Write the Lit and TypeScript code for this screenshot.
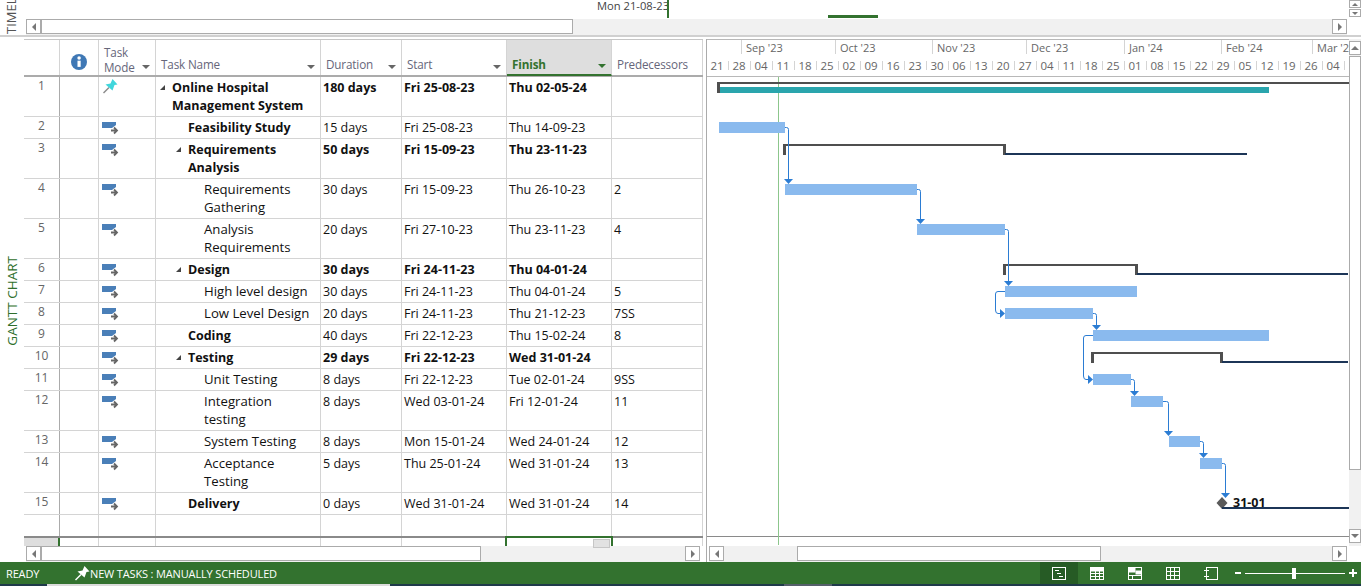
import { LitElement, html, css, svg } from 'lit';
import { customElement } from 'lit/decorators.js';

type Task = { id: number; name: string; level: number; bold?: boolean; group?: boolean; dur: string; start: string; finish: string; pred: string; pin?: boolean };

const TASKS: Task[] = [
  { id: 1, name: 'Online Hospital\nManagement System', level: 0, bold: true, group: true, dur: '180 days', start: 'Fri 25-08-23', finish: 'Thu 02-05-24', pred: '', pin: true },
  { id: 2, name: 'Feasibility Study', level: 1, bold: true, dur: '15 days', start: 'Fri 25-08-23', finish: 'Thu 14-09-23', pred: '' },
  { id: 3, name: 'Requirements\nAnalysis', level: 1, bold: true, group: true, dur: '50 days', start: 'Fri 15-09-23', finish: 'Thu 23-11-23', pred: '' },
  { id: 4, name: 'Requirements\nGathering', level: 2, dur: '30 days', start: 'Fri 15-09-23', finish: 'Thu 26-10-23', pred: '2' },
  { id: 5, name: 'Analysis\nRequirements', level: 2, dur: '20 days', start: 'Fri 27-10-23', finish: 'Thu 23-11-23', pred: '4' },
  { id: 6, name: 'Design', level: 1, bold: true, group: true, dur: '30 days', start: 'Fri 24-11-23', finish: 'Thu 04-01-24', pred: '' },
  { id: 7, name: 'High level design', level: 2, dur: '30 days', start: 'Fri 24-11-23', finish: 'Thu 04-01-24', pred: '5' },
  { id: 8, name: 'Low Level Design', level: 2, dur: '20 days', start: 'Fri 24-11-23', finish: 'Thu 21-12-23', pred: '7SS' },
  { id: 9, name: 'Coding', level: 1, bold: true, dur: '40 days', start: 'Fri 22-12-23', finish: 'Thu 15-02-24', pred: '8' },
  { id: 10, name: 'Testing', level: 1, bold: true, group: true, dur: '29 days', start: 'Fri 22-12-23', finish: 'Wed 31-01-24', pred: '' },
  { id: 11, name: 'Unit Testing', level: 2, dur: '8 days', start: 'Fri 22-12-23', finish: 'Tue 02-01-24', pred: '9SS' },
  { id: 12, name: 'Integration\ntesting', level: 2, dur: '8 days', start: 'Wed 03-01-24', finish: 'Fri 12-01-24', pred: '11' },
  { id: 13, name: 'System Testing', level: 2, dur: '8 days', start: 'Mon 15-01-24', finish: 'Wed 24-01-24', pred: '12' },
  { id: 14, name: 'Acceptance\nTesting', level: 2, dur: '5 days', start: 'Thu 25-01-24', finish: 'Wed 31-01-24', pred: '13' },
  { id: 15, name: 'Delivery', level: 1, bold: true, dur: '0 days', start: 'Wed 31-01-24', finish: 'Wed 31-01-24', pred: '14' },
];

const MONTHS = [
  { x: 34, label: "Sep '23" }, { x: 128, label: "Oct '23" }, { x: 225, label: "Nov '23" },
  { x: 319, label: "Dec '23" }, { x: 417, label: "Jan '24" }, { x: 514, label: "Feb '24" },
  { x: 605, label: "Mar '24" },
];
const WEEKS = '21 28 04 11 18 25 02 09 16 23 30 06 13 20 27 04 11 18 25 01 08 15 22 29 05 12 19 26 04'.split(' ');

// everything in the chart is in page coordinates, the svg viewBox starts at the plot corner
const CX = 707;
const BARS = [[719, 122, 785], [785, 184, 917], [917, 224, 1005], [1005, 286, 1137], [1005, 308, 1093], [1093, 330, 1269], [1093, 374, 1131], [1131, 396, 1163], [1169, 436, 1200], [1200, 458, 1222]];
const SUMMARIES = [[783, 144, 1006, 153, 1247], [1003, 264, 1138, 273, 1348], [1091, 352, 1223, 361, 1348]];
const DOWN_LINKS = [[785, 127, 788, 183], [917, 189, 920, 223], [1005, 229, 1008, 285], [1093, 313, 1096, 329], [1131, 379, 1134, 395], [1163, 401, 1168, 435], [1200, 441, 1203, 457], [1222, 463, 1225, 497]];
const SS_LINKS = [[1005, 291, 995, 313], [1093, 335, 1083, 379]];

const pinIcon = (fill: string, needle: string) => svg`<svg width="16" height="16" viewBox="0 0 16 16"><path d="M1.500 15 7 9.500" stroke="${needle}" stroke-width="1.400"/><path d="M10.500 1 15.500 6.500 12.500 7 10.500 12.500 3.500 6.500 8.500 5.500Z" fill="${fill}"/></svg>`;

@customElement('app-root')
export class AppRoot extends LitElement {
  static styles = css`
    :host { display: block; width: 1361px; height: 586px; overflow: hidden; background: #fff; font-family: 'Open Sans', 'Noto Sans', sans-serif; font-size: 12.5px; color: #111; }
    * { box-sizing: border-box; }
    .page { display: flex; flex-direction: column; height: 586px; }

    .timeline { height: 37px; flex: none; display: flex; border-bottom: 2px solid #d0d0d0; position: relative; }
    .vlabel { writing-mode: vertical-rl; transform: rotate(180deg); white-space: nowrap; }
    .tl-label { width: 26px; flex: none; height: 34px; overflow: hidden; padding-left: 4px; color: #555; font-size: 13px; line-height: 15px; }
    .tl-label .vlabel { display: block; height: 34px; }
    .tl-body { flex: 1; display: flex; flex-direction: column; }
    .tl-band { height: 19px; flex: none; }
    .tl-date { position: absolute; left: 597px; top: -2px; font-size: 11.2px; line-height: 16px; color: #444; }
    .tl-now { position: absolute; left: 667px; top: 0; width: 2px; height: 18px; background: #33722f; }
    .tl-mark { position: absolute; left: 828px; top: 15px; width: 50px; height: 3px; background: #33722f; }
    .tl-spin { position: absolute; right: 0; top: 0; width: 12px; display: flex; flex-direction: column; gap: 1px; }
    .tl-spin i { display: block; height: 8px; background: #fff; border: 1px solid #ababab; position: relative; }
    .tl-spin i::after { content: ''; position: absolute; left: 2px; top: 2px; border: 3px solid transparent; border-bottom-color: #777; border-top: 0; }
    .tl-spin i:last-child::after { border-bottom: 0; border-top: 3px solid #777; }

    .sbar { height: 16px; display: flex; background: #f1f1f1; flex: none; }
    .timeline .sbar { margin-right: 14px; }
    .sbtn { width: 15px; flex: none; height: 15px; background: #fff; border: 1px solid #ababab; display: flex; align-items: center; justify-content: center; }
    .sbtn::after { content: ''; border: 4px solid transparent; border-left: 0; border-right: 4px solid #777; }
    .sbtn.next::after { border-right: 0; border-left: 4px solid #777; }
    .thumb { height: 15px; background: #fff; border: 1px solid #ababab; flex: none; }
    .thumb.tl { width: 532px; }
    .thumb.tasks { width: 440px; }
    .thumb.bars { width: 304px; }
    .track { flex: 1; }
    .track.before { flex: none; width: 73px; }

    .main { flex: 1; display: flex; min-height: 0; padding-top: 2px; }
    .side { width: 24px; flex: none; display: flex; align-items: center; justify-content: center; }
    .side .vlabel { color: #2f6f2c; font-size: 13.500px; line-height: 16px; }
    .sheet { width: 679px; flex: none; display: flex; flex-direction: column; }
    .divider { width: 4px; flex: none; border-right: 1px solid #ababab; }

    .cols { display: grid; grid-template-columns: 36px 39px 57px 165px 81px 105px 105px 91px; width: 679px; }
    .head { height: 38px; border-top: 1px solid #c6c6c6; border-bottom: 2px solid #ababab; flex: none; color: #66667a; font-size: 11.700px; letter-spacing: -0.15px; line-height: 15px; }
    .head > div { border-right: 1px solid #d4d4d4; position: relative; display: flex; align-items: flex-end; padding: 0 0 3px 5px; height: 35px; }
    .head > div.finish { background: #dedede; color: #33722f; font-weight: 700; height: 36px; border-bottom: 2px solid #33722f; padding-bottom: 2px; }
    .head > div.mode { display: block; padding-top: 5px; }
    .filter { position: absolute; right: 5px; bottom: 6px; border: 4px solid transparent; border-bottom: 0; border-top: 4px solid #666; }
    .finish .filter { border-top-color: #33722f; }
    .head > div.info { justify-content: center; padding: 0 0 5px; }
    .info svg { display: block; }

    .rows { flex: 1; min-height: 0; display: flex; flex-direction: column; }
    .row { border-bottom: 1px solid #d4d4d4; line-height: 18px; height: 22px; flex: none; }
    .row.tall { height: 40px; }
    .row > div { border-right: 1px solid #d4d4d4; padding: 2px 0 0 2px; white-space: pre-line; }
    .row > div.rowid { color: #666; text-align: center; padding: 0; font-size: 12px; line-height: 18px; border-right-color: #ababab; }
    .row.group > div.b { font-weight: 700; }
    .row > div.iconcell { padding: 0; }
    .row > div.name { position: relative; padding-left: var(--indent); padding-top: 1px; font-size: 13.200px; }
    .row.bold > div.name { font-size: 12.500px; font-weight: 700; padding-top: 2px; }
    .tri { position: absolute; top: 8px; width: 0; height: 0; border-style: solid; border-width: 0 0 5px 5px; border-color: transparent transparent #444 transparent; }
    .mode-ic { display: block; }
    .mode-ic.pinned { margin: 1px 0 0 3px; }

    .row.spacer { height: 21px; flex: none; border-bottom: 0; }
    .foot { height: 10px; flex: none; border-top: 2px solid #8a8a8a; }
    .foot > div { border-right: 1px solid #d4d4d4; height: 8px; }
    .foot .rowid { background: #dedede; border-right: 2px solid #33722f; }
    .foot .sel { border: 2px solid #33722f; border-bottom: 0; margin: -2px -1px 0 -2px; height: 10px; position: relative; }
    .foot .sel::after { content: ''; position: absolute; right: 1px; top: 1px; width: 15px; height: 7px; background: #e2e2e2; border: 1px solid #c6c6c6; }
    .sheet .sbar { margin: 0 3px 0 2px; }

    .chart { flex: 1; min-width: 0; display: flex; flex-direction: column; }
    .chart-top { display: flex; flex: 1; min-height: 0; }
    .plot { position: relative; width: 642px; flex: none; }
    .plot svg { position: absolute; left: 0; top: 0; display: block; }
    .plot text { font-family: 'Open Sans', 'Noto Sans', sans-serif; }
    .vbar { flex: 1; min-width: 0; background: #f1f1f1; display: flex; flex-direction: column; padding-top: 2px; padding-bottom: 3px; }
    .vbtn { height: 14px; flex: none; background: #fff; border: 1px solid #ababab; display: flex; align-items: center; justify-content: center; }
    .vbtn::after { content: ''; border: 4px solid transparent; border-top: 0; border-bottom: 4px solid #777; }
    .vbtn.down::after { border-bottom: 0; border-top: 4px solid #777; }
    .vthumb { height: 414px; margin-top: 1px; flex: none; background: #fff; border: 1px solid #ababab; }
    .vtrack { flex: 1; }
    .chart .sbar { margin-left: 2px; margin-right: 14px; }

    .status { height: 22px; flex: none; background: #33722f; color: #fff; display: flex; align-items: center; font-size: 11px; letter-spacing: -0.15px; }
    .status .ready { margin-left: 6px; width: 68px; }
    .status .pin { display: flex; }
    .status .views { margin-left: auto; display: flex; align-items: center; height: 22px; }
    .status .view { width: 38px; height: 22px; display: flex; align-items: center; justify-content: center; }
    .status .view.on { background: #265b25; }
    .zoom { display: flex; align-items: center; width: 126px; margin-left: 5px; height: 22px; gap: 4px; padding-right: 4px; }
    .zoom .minus { width: 6px; height: 2px; background: #fff; flex: none; }
    .zoom .slider { flex: 1; height: 1px; background: #fff; position: relative; }
    .zoom .slider i { position: absolute; left: 47px; top: -5px; width: 4px; height: 11px; background: #fff; }
    .zoom .plus { width: 8px; height: 8px; flex: none; background: linear-gradient(#fff, #fff) center/8px 2px no-repeat, linear-gradient(#fff, #fff) center/2px 8px no-repeat; }
    .taskbar { height: 2px; flex: none; background: #1f3a4a; display: flex; }
    .taskbar .open { width: 343px; margin-left: 47px; background: #dcdcdc; }
    .taskbar .active { width: 48px; margin-left: 394px; background: #55606a; }
  `;

  modeIcon(t: Task) {
    if (t.pin) return html`<span class="mode-ic pinned">${pinIcon('#40d6dc', '#8a8a8a')}</span>`;
    return html`<svg class="mode-ic" width="20" height="18" viewBox="0 0 20 18"><path d="M3 5h14v3l-4 3H3z" fill="#4a7fb8"/><path d="M12 13.500h5M15 10.500l3 3-3 3" fill="none" stroke="#666" stroke-width="1.800"/></svg>`;
  }

  renderChart() {
    const H = 507;
    return svg`<svg width="642" height="${H}" viewBox="${CX} 39 642 ${H}">
      <path d="M${CX} 39.500H1349M${CX} 76.500H1349" stroke="#b8b8b8" fill="none"/>
      <path d="M${CX} 536.500H1349" stroke="#8a8a8a" fill="none"/>
      ${MONTHS.map(m => svg`<path d="M${CX + m.x + .5} 40V54" stroke="#d4d4d4"/>
        <text x="${CX + m.x + 5}" y="52" font-size="11" fill="#666">${m.label}</text>`)}
      ${WEEKS.map((w, i) => svg`<path d="M${728.5 + i * 22} 61V70" stroke="#d4d4d4"/>
        <text x="${717 + i * 22}" y="70" font-size="11.500" fill="#666" text-anchor="middle">${w}</text>`)}
      <path d="M778.500 77V545" stroke="#8cc68c"/>
      <rect x="717" y="82" width="632" height="2" fill="#4f4f4f"/>
      <rect x="717" y="82" width="3" height="11" fill="#4f4f4f"/>
      <rect x="720" y="87" width="549" height="6" fill="#2aa5ad"/>
      ${BARS.map(([x, y, e]) => svg`<rect x="${x}" y="${y}" width="${e - x}" height="11" fill="#8abaee"/>`)}
      ${SUMMARIES.map(([x, y, e, ny, ne]) => svg`
        <rect x="${x}" y="${y}" width="${e - x}" height="2" fill="#4f4f4f"/>
        <rect x="${x}" y="${y}" width="3" height="11" fill="#4f4f4f"/>
        <rect x="${e - 3}" y="${y}" width="3" height="11" fill="#4f4f4f"/>
        <rect x="${e - 1}" y="${ny}" width="${ne - e + 1}" height="2" fill="#1c3557"/>`)}
      ${DOWN_LINKS.map(([x, y, ax, ay]) => svg`
        <path d="M${x} ${y + .5}H${ax - 1.5}Q${ax + .5} ${y + .5} ${ax + .5} ${y + 2.5}V${ay}" fill="none" stroke="#2b7cd3"/>
        <path d="M${ax - 4} ${ay - 4}h9l-4.500 5z" fill="#2b7cd3"/>`)}
      ${SS_LINKS.map(([x, y, lx, ey]) => svg`
        <path d="M${x} ${y + .5}H${lx + 3}Q${lx + .5} ${y + .5} ${lx + .5} ${y + 3}V${ey - 3}Q${lx + .5} ${ey + .5} ${lx + 3} ${ey + .5}H${x - 4}" fill="none" stroke="#2b7cd3"/>
        <path d="M${x - 5} ${ey - 4}l5 4.500l-5 4.500z" fill="#2b7cd3"/>`)}
      <path d="M1222 497l5.500 6-5.500 6-5.500-6z" fill="#5a5a5a"/>
      <rect x="1222" y="507" width="127" height="2" fill="#1c3557"/>
      <text x="1233" y="507" font-size="12.500" font-weight="700" fill="#111">31-01</text>
    </svg>`;
  }

  render() {
    return html`<div class="page">
      <div class="timeline">
        <div class="tl-label"><span class="vlabel">TIMELINE</span></div>
        <div class="tl-body">
          <div class="tl-band"></div>
          <div class="sbar">
            <div class="sbtn"></div>
            <div class="thumb tl"></div>
            <div class="track"></div>
            <div class="sbtn next"></div>
          </div>
        </div>
        <div class="tl-date">Mon 21-08-23</div>
        <div class="tl-now"></div>
        <div class="tl-mark"></div>
        <div class="tl-spin"><i></i><i></i></div>
      </div>

      <div class="main">
        <div class="side"><span class="vlabel">GANTT CHART</span></div>
        <div class="sheet">
          <div class="cols head">
            <div class="rowid"></div>
            <div class="info">
              <svg width="16" height="16" viewBox="0 0 18 18"><circle cx="9" cy="9" r="9" fill="#3f78b5"/><rect x="7.300" y="7.500" width="3.600" height="7" fill="#fff"/><circle cx="9.100" cy="4.600" r="2" fill="#fff"/></svg>
            </div>
            <div class="mode">Task<br />Mode<span class="filter"></span></div>
            <div>Task Name<span class="filter"></span></div>
            <div>Duration<span class="filter"></span></div>
            <div>Start<span class="filter"></span></div>
            <div class="finish">Finish<span class="filter"></span></div>
            <div>Predecessors</div>
          </div>
          <div class="rows">
            ${TASKS.map(t => html`<div class="cols row ${t.name.includes('\n') ? 'tall' : ''} ${t.bold ? 'bold' : ''} ${t.group ? 'group' : ''}">
              <div class="rowid">${t.id}</div>
              <div></div>
              <div class="iconcell">${this.modeIcon(t)}</div>
              <div class="name" style="--indent:${16 + t.level * 16}px">${t.group ? html`<span class="tri" style="left:${4 + t.level * 16}px"></span>` : ''}${t.name}</div>
              <div class="b">${t.dur}</div>
              <div class="b">${t.start}</div>
              <div class="b">${t.finish}</div>
              <div>${t.pred}</div>
            </div>`)}
            <div class="cols row spacer">
              <div class="rowid"></div><div></div><div></div><div></div><div></div><div></div><div></div><div></div>
            </div>
          </div>
          <div class="cols foot">
            <div class="rowid"></div><div></div><div></div><div></div><div></div><div></div><div class="sel"></div><div></div>
          </div>
          <div class="sbar">
            <div class="sbtn"></div>
            <div class="thumb tasks"></div>
            <div class="track"></div>
            <div class="sbtn next"></div>
          </div>
        </div>
        <div class="divider"></div>
        <div class="chart">
          <div class="chart-top">
            <div class="plot">${this.renderChart()}</div>
            <div class="vbar"><div class="vbtn"></div><div class="vthumb"></div><div class="vtrack"></div><div class="vbtn down"></div></div>
          </div>
          <div class="sbar">
            <div class="sbtn"></div>
            <div class="track before"></div>
            <div class="thumb bars"></div>
            <div class="track"></div>
            <div class="sbtn next"></div>
          </div>
        </div>
      </div>
      <div class="status">
        <span class="ready">READY</span>
        <span class="pin">${pinIcon('#fff', '#fff')}</span>
        <span>NEW TASKS : MANUALLY SCHEDULED</span>
        <div class="views">
          <div class="view on"><svg width="14" height="13" fill="none" stroke="#fff"><rect x=".5" y=".5" width="13" height="12"/><path d="M3 3.500h4M5 6.500h4M7 9.500h4"/></svg></div>
          <div class="view"><svg width="14" height="13" fill="none" stroke="#fff"><rect x=".5" y=".5" width="13" height="12"/><rect x="1" y="1" width="12" height="3" fill="#fff"/><path d="M5.500 4v9M9.500 4v9M1 6.500h12M1 9.500h12"/></svg></div>
          <div class="view"><svg width="14" height="13" fill="none" stroke="#fff"><rect x=".5" y=".5" width="13" height="12"/><rect x="1" y="1" width="6" height="4" fill="#fff"/><rect x="8" y="4" width="5" height="3" fill="#fff"/><path d="M1 8.500h12M4.500 8v5"/></svg></div>
          <div class="view"><svg width="14" height="13" fill="none" stroke="#fff"><rect x=".5" y=".5" width="13" height="12"/><path d="M4.500 1v12M8.500 1v12M1 4.500h12M1 8.500h12"/></svg></div>
          <div class="view"><svg width="14" height="13" fill="none" stroke="#fff"><rect x="2.500" y=".5" width="11" height="12"/><path d="M0 3.500h5M0 9.500h5"/></svg></div>
        </div>
        <div class="zoom"><span class="minus"></span><span class="slider"><i></i></span><span class="plus"></span></div>
      </div>
      <div class="taskbar"><div class="open"></div><div class="active"></div></div>
    </div>`;
  }
}
